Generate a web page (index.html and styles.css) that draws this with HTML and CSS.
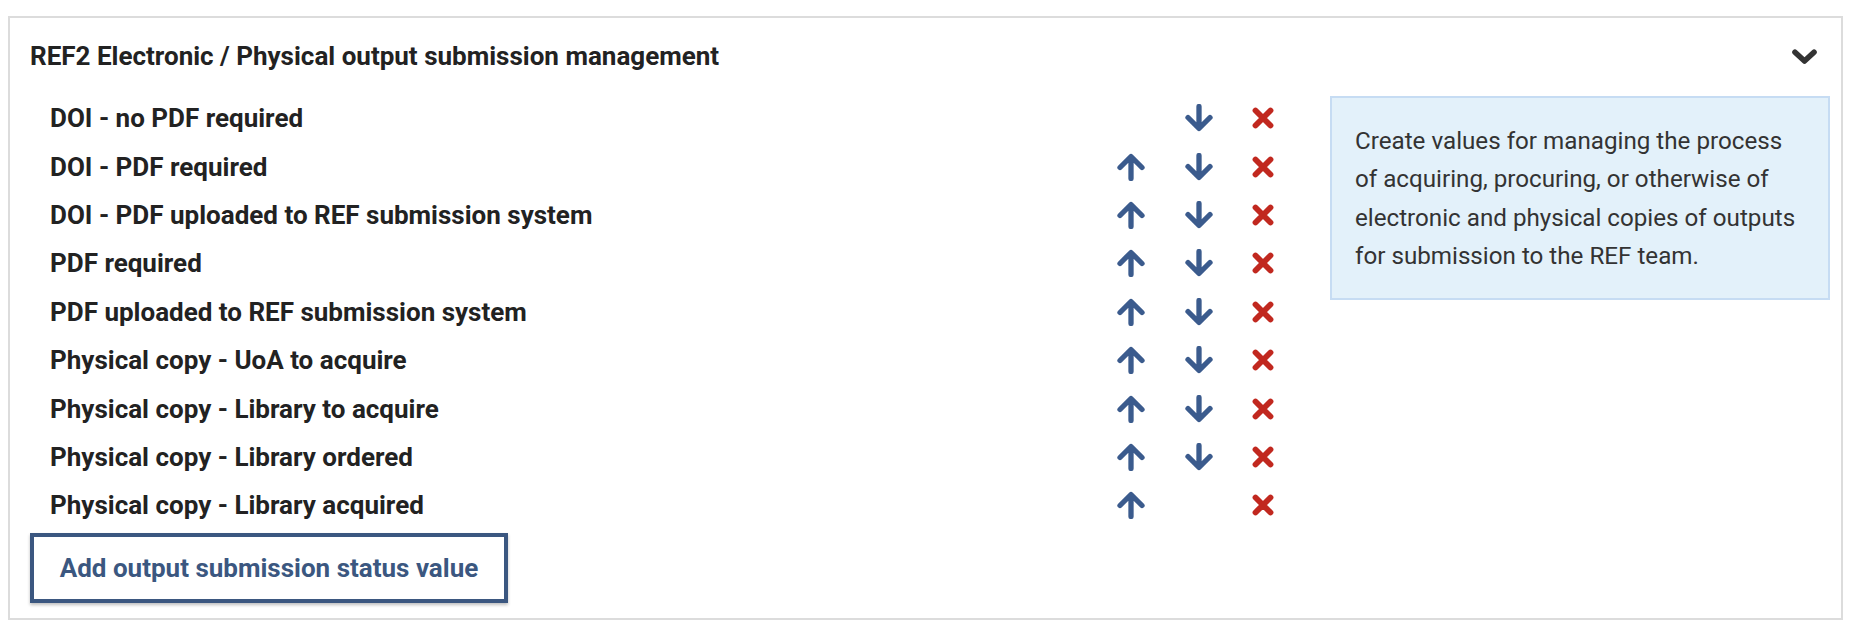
FILE: index.html
```html
<!DOCTYPE html>
<html lang="en">
<head>
<meta charset="utf-8">
<title>REF2 output submission management</title>
<link rel="stylesheet" href="styles.css">
</head>
<body>
<section class="card">
  <header class="card-header">
    <h2 class="card-title">REF2 Electronic / Physical output submission management</h2>
    <svg class="chevron" viewBox="0 0 25 15" width="25" height="15" aria-hidden="true"><path d="M3 3.2l9.5 8.8 9.5-8.8" fill="none" stroke="#333" stroke-width="5.6" stroke-linecap="round" stroke-linejoin="round"/></svg>
  </header>
  <div class="card-body">
    <div class="values">
      <ul class="value-list">
        <li class="value-row"><span class="value-name">DOI - no PDF required</span><span class="cell"></span><span class="cell"><svg class="ico arrow" viewBox="0 0 28 28"><path d="M14 2.5V24M3 13.5l11 11 11-11"/></svg></span><span class="cell"><svg class="ico del" viewBox="0 0 22 22"><path d="M3.5 3.5l15 15M18.5 3.5l-15 15"/></svg></span></li>
        <li class="value-row"><span class="value-name">DOI - PDF required</span><span class="cell"><svg class="ico arrow" viewBox="0 0 28 28"><path d="M14 25.5V4M3 14.5l11-11 11 11"/></svg></span><span class="cell"><svg class="ico arrow" viewBox="0 0 28 28"><path d="M14 2.5V24M3 13.5l11 11 11-11"/></svg></span><span class="cell"><svg class="ico del" viewBox="0 0 22 22"><path d="M3.5 3.5l15 15M18.5 3.5l-15 15"/></svg></span></li>
        <li class="value-row"><span class="value-name">DOI - PDF uploaded to REF submission system</span><span class="cell"><svg class="ico arrow" viewBox="0 0 28 28"><path d="M14 25.5V4M3 14.5l11-11 11 11"/></svg></span><span class="cell"><svg class="ico arrow" viewBox="0 0 28 28"><path d="M14 2.5V24M3 13.5l11 11 11-11"/></svg></span><span class="cell"><svg class="ico del" viewBox="0 0 22 22"><path d="M3.5 3.5l15 15M18.5 3.5l-15 15"/></svg></span></li>
        <li class="value-row"><span class="value-name">PDF required</span><span class="cell"><svg class="ico arrow" viewBox="0 0 28 28"><path d="M14 25.5V4M3 14.5l11-11 11 11"/></svg></span><span class="cell"><svg class="ico arrow" viewBox="0 0 28 28"><path d="M14 2.5V24M3 13.5l11 11 11-11"/></svg></span><span class="cell"><svg class="ico del" viewBox="0 0 22 22"><path d="M3.5 3.5l15 15M18.5 3.5l-15 15"/></svg></span></li>
        <li class="value-row"><span class="value-name">PDF uploaded to REF submission system</span><span class="cell"><svg class="ico arrow" viewBox="0 0 28 28"><path d="M14 25.5V4M3 14.5l11-11 11 11"/></svg></span><span class="cell"><svg class="ico arrow" viewBox="0 0 28 28"><path d="M14 2.5V24M3 13.5l11 11 11-11"/></svg></span><span class="cell"><svg class="ico del" viewBox="0 0 22 22"><path d="M3.5 3.5l15 15M18.5 3.5l-15 15"/></svg></span></li>
        <li class="value-row"><span class="value-name">Physical copy - UoA to acquire</span><span class="cell"><svg class="ico arrow" viewBox="0 0 28 28"><path d="M14 25.5V4M3 14.5l11-11 11 11"/></svg></span><span class="cell"><svg class="ico arrow" viewBox="0 0 28 28"><path d="M14 2.5V24M3 13.5l11 11 11-11"/></svg></span><span class="cell"><svg class="ico del" viewBox="0 0 22 22"><path d="M3.5 3.5l15 15M18.5 3.5l-15 15"/></svg></span></li>
        <li class="value-row"><span class="value-name">Physical copy - Library to acquire</span><span class="cell"><svg class="ico arrow" viewBox="0 0 28 28"><path d="M14 25.5V4M3 14.5l11-11 11 11"/></svg></span><span class="cell"><svg class="ico arrow" viewBox="0 0 28 28"><path d="M14 2.5V24M3 13.5l11 11 11-11"/></svg></span><span class="cell"><svg class="ico del" viewBox="0 0 22 22"><path d="M3.5 3.5l15 15M18.5 3.5l-15 15"/></svg></span></li>
        <li class="value-row"><span class="value-name">Physical copy - Library ordered</span><span class="cell"><svg class="ico arrow" viewBox="0 0 28 28"><path d="M14 25.5V4M3 14.5l11-11 11 11"/></svg></span><span class="cell"><svg class="ico arrow" viewBox="0 0 28 28"><path d="M14 2.5V24M3 13.5l11 11 11-11"/></svg></span><span class="cell"><svg class="ico del" viewBox="0 0 22 22"><path d="M3.5 3.5l15 15M18.5 3.5l-15 15"/></svg></span></li>
        <li class="value-row"><span class="value-name">Physical copy - Library acquired</span><span class="cell"><svg class="ico arrow" viewBox="0 0 28 28"><path d="M14 25.5V4M3 14.5l11-11 11 11"/></svg></span><span class="cell"></span><span class="cell"><svg class="ico del" viewBox="0 0 22 22"><path d="M3.5 3.5l15 15M18.5 3.5l-15 15"/></svg></span></li>
      </ul>
      <button class="add-btn" type="button">Add output submission status value</button>
    </div>
    <aside class="info-box">Create values for managing the process of acquiring, procuring, or otherwise of electronic and physical copies of outputs for submission to the REF team.</aside>
  </div>
</section>
</body>
</html>
```

FILE: styles.css
```css
* { box-sizing: border-box; }
body {
  margin: 0;
  background: #fff;
  font-family: Roboto, "Liberation Sans", Arial, sans-serif;
  color: #222;
}
.card {
  margin: 16px 21px 0 8px;
  height: 604px;
  border: 2px solid #dcdcdc;
  padding: 0 11px 0 20px;
}
.card-header {
  display: flex;
  align-items: center;
  justify-content: space-between;
  height: 76px;
  padding-right: 13px;
}
.card-title {
  margin: 0;
  font-size: 26px;
  font-weight: 700;
  color: #222;
}
.chevron { display: block; }
.card-body {
  display: flex;
  align-items: flex-start;
}
.values {
  flex: 1;
}
.value-list {
  list-style: none;
  margin: 0;
  padding: 0;
}
.value-row {
  display: grid;
  grid-template-columns: 1067px 68px 68px 60px;
  align-items: center;
  height: 48.4px;
}
.value-name {
  padding-left: 20px;
  font-size: 26px;
  font-weight: 700;
  color: #222;
}
.cell {
  display: flex;
  justify-content: center;
  align-items: center;
}
.ico { display: block; fill: none; stroke-linecap: round; stroke-linejoin: round; }
.arrow { width: 28px; height: 28px; stroke: #3b5b8d; stroke-width: 5.3; }
.del { width: 22px; height: 22px; stroke: #c1281f; stroke-width: 5.8; }
.add-btn {
  margin-top: 3px;
  width: 478px;
  height: 70px;
  border: 4px solid #3b5780;
  background: #fff;
  color: #3b5780;
  font-family: Roboto, "Liberation Sans", Arial, sans-serif;
  font-size: 26px;
  font-weight: 700;
  box-shadow: 0 2px 3px rgba(0, 0, 0, 0.25);
  padding: 0;
}
.info-box {
  width: 500px;
  margin-top: 2px;
  background: #e3f1fa;
  border: 2px solid #c6dcf3;
  padding: 24px 26px 22px 23px;
  font-size: 24.2px;
  line-height: 38.4px;
  color: #333;
}
```
